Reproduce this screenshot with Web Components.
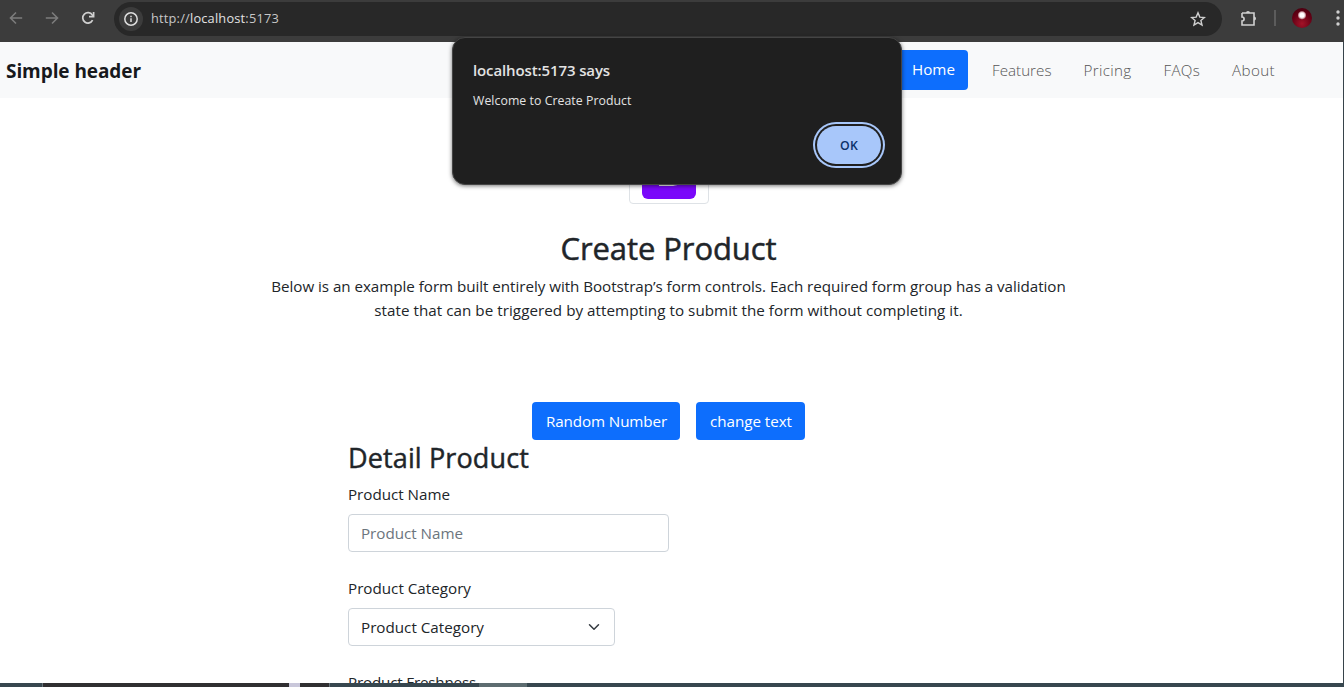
<!DOCTYPE html>
<html lang="en">
<head>
<meta charset="utf-8">
<title>Create Product</title>
<style>
html,body{margin:0;height:100%;overflow:hidden}
body{font-family:"Open Sans","Noto Sans",sans-serif;color:#212529;background:#fff}
</style>
</head>
<body>
<app-window></app-window>
<script>
const define = (name, html, after) => {
  const t = document.createElement('template');
  t.innerHTML = html;
  customElements.define(name, class extends HTMLElement {
    connectedCallback() {
      if (this.shadowRoot) return;
      this.attachShadow({mode: 'open'}).append(t.content.cloneNode(true));
      if (after) after(this);
    }
  });
};

// One line of text whose tracking is adjusted to the width given in its "w" attribute.
define('fit-text', `<style>:host{display:inline-block;white-space:nowrap;text-align:left}span{display:inline-block}</style><span><slot></slot></span>`, el => {
  const s = el.shadowRoot.querySelector('span');
  const w = +el.getAttribute('w');
  requestAnimationFrame(() => {
    s.style.letterSpacing = (w - s.getBoundingClientRect().width) / el.textContent.length + 'px';
    el.style.width = w + 'px';
  });
});

define('browser-bar', `<style>
:host{display:flex;align-items:center;height:42px;box-sizing:border-box;padding-bottom:6px;background:#3c3c3c;flex:none}
svg{display:block;flex:none}
.nav{display:flex;gap:20px;padding-left:8px;width:106px;box-sizing:border-box;flex:none}
.url{display:flex;align-items:center;box-sizing:border-box;width:1108px;height:34px;margin-top:1px;border-radius:17px;background:#282828;padding:0 16px 0 5px;flex:none;color:#e3e3e3;font-size:12.8px}
.url i{display:grid;place-items:center;width:24px;height:24px;border-radius:50%;background:#3c3c3c;margin-right:8px}
.url fit-text{flex:1;padding-bottom:2px}
.url em{font-style:normal;color:#c7c7c7}
.star{margin-left:auto}
.url-wrap{margin-left:8px}
.sep{flex:none;width:2px;height:16px;background:#5c5c5c;margin:0 16px 0 16px}
.av{flex:none;width:20px;height:20px;border-radius:50%;background:radial-gradient(circle at 50% 36%,#fff 0 2px,#d9b5bb 3.2px,transparent 4.5px),radial-gradient(circle at 50% 78%,#a31328,#650015 55%,#3e000d);margin-right:17px}
.ext{margin-left:18px}
</style>
<div class="nav">
<svg width="16" height="16" viewBox="0 0 16 16" fill="none" stroke="#7c7c7c" stroke-width="1.6"><path d="M14.2 8H2.8M8 2.5 2.5 8 8 13.500"/></svg>
<svg width="16" height="16" viewBox="0 0 16 16" fill="none" stroke="#7c7c7c" stroke-width="1.6"><path d="M1.800 8h11.400M8 2.500 13.500 8 8 13.500"/></svg>
<svg width="16" height="16" viewBox="0 0 16 16" fill="none" stroke="#d0d0d0" stroke-width="1.700"><path d="M12.600 10.200A5.200 5.200 0 1 1 12.300 5L13.600 6.400"/><path d="M13.600 2v4.600H9"/></svg>
</div>
<div class="url-wrap"><div class="url"><i><svg width="16" height="16" viewBox="0 0 16 16" fill="none" stroke="#dedede" stroke-width="1.500"><circle cx="8" cy="8" r="6.200"/><path d="M8 7.200v3.800M8 4.700v1.500"/></svg></i>
<fit-text w="128"><em>http://</em>localhost<em>:5173</em></fit-text>
<svg class="star" width="16" height="16" viewBox="0 0 16 16" fill="none" stroke="#d0d0d0" stroke-width="1.400"><path d="M8 1.800 9.800 6.100 14.400 6.500 10.900 9.500 12 14 8 11.600 4 14 5.100 9.500 1.600 6.500 6.200 6.100Z"/></svg></div></div>
<svg class="ext" width="18" height="18" viewBox="0 0 18 18"><path d="M2 4h4.500M9.500 4H14V8M14 11v5H2v-4c2.800 0 2.800-4 0-4V4M6.500 4h3M14 8v3" fill="none" stroke="#d0d0d0" stroke-width="1.600"/><path d="M6 4a2 2 0 0 1 4 0ZM14 7.500a2 2 0 0 1 0 4Z" fill="#d0d0d0"/></svg>
<div class="sep"></div><div class="av"></div>
<svg width="16" height="18" viewBox="0 0 16 18" fill="#d0d0d0"><circle cx="9" cy="3" r="1.700"/><circle cx="9" cy="9" r="1.700"/><circle cx="9" cy="15" r="1.700"/></svg>`);

define('site-header', `<style>
:host{display:flex;align-items:center;height:56px;background:#f8f9fa;padding:0 53px 0 6px;flex:none}
.brand{font-size:19px;font-weight:700;line-height:28px;color:#17191c;padding-top:2px}
nav{display:flex;align-items:center;margin-left:auto}
a{display:block;font-size:15.200px;line-height:24px;padding:8px 16px;color:#555;font-weight:300}
a.on{background:#0d6efd;color:#fff;border-radius:4px;margin-right:8px;font-weight:400;padding:7px 13px 9px 16px}
a:last-child{padding-right:15px}
</style>
<div class="brand"><fit-text w="135">Simple header</fit-text></div>
<nav><a class="on"><fit-text w="43">Home</fit-text></a><a><fit-text w="59.500">Features</fit-text></a><a><fit-text w="48">Pricing</fit-text></a><a><fit-text w="36.500">FAQs</fit-text></a><a><fit-text w="43">About</fit-text></a></nav>`);

define('brand-thumb', `<style>
:host{display:flex;justify-content:center;align-items:flex-end;box-sizing:border-box;width:80px;height:64px;border:1px solid #dee2e6;border-radius:4px;padding-bottom:4px}
svg{display:block}</style>
<svg width="54" height="43" viewBox="0 0 54 43"><rect width="54" height="43" rx="6" fill="#7a08fa"/><path d="M17 8h11c12 0 12 9 5 11 10 2 8 11-4 11H17Z" fill="#fff"/></svg>`);

define('ui-button', `<style>
:host{display:block;box-sizing:border-box;height:38px;padding:7px 13px 7px 14px;border-radius:4px;background:#0d6efd;color:#fff;font-size:15.200px;line-height:24px}
</style><slot></slot>`);

define('form-field', `<style>
:host{display:block;font-size:15.200px;line-height:24px;margin-bottom:24px}
label{display:block;margin-bottom:8px}
.box{display:flex;align-items:center;justify-content:space-between;box-sizing:border-box;width:var(--box);height:38px;border:1px solid #ced4da;border-radius:4px;padding:0 12px;background:#fff;color:var(--ink,#212529)}
</style><label><slot name="label"></slot></label><div class="box"><slot></slot></div>`);

define('chevron-down', `<style>:host{display:block}svg{display:block}</style>
<svg width="16" height="12" viewBox="0 0 16 16" fill="none" stroke="#343a40" stroke-width="2" stroke-linecap="round" stroke-linejoin="round"><path d="m2 5 6 6 6-6"/></svg>`);

define('product-page', `<style>
:host{display:flex;flex-direction:column;flex:1;min-height:0;overflow:hidden;background:#fff}
.intro{display:flex;flex-direction:column;align-items:center;width:1337px;padding-top:42px}
h2{margin:25px 0 7px;font-size:31px;line-height:38px;font-weight:500;-webkit-text-stroke:.5px #212529}
.p{font-size:15.200px;line-height:24px;height:24px}
.actions{display:flex;gap:16px;margin-top:80px}
form{padding-left:348px}
h3{margin:1px 0 7px;font-size:27px;line-height:34px;font-weight:500;-webkit-text-stroke:.45px #212529}
</style>
<div class="intro"><brand-thumb></brand-thumb>
<h2><fit-text w="216">Create Product</fit-text></h2>
<div class="p"><fit-text w="794.500">Below is an example form built entirely with Bootstrap’s form controls. Each required form group has a validation</fit-text></div>
<div class="p"><fit-text w="588.500">state that can be triggered by attempting to submit the form without completing it.</fit-text></div>
<div class="actions"><ui-button><fit-text w="121">Random Number</fit-text></ui-button><ui-button><fit-text w="82">change text</fit-text></ui-button></div></div>
<form><h3><fit-text w="181">Detail Product</fit-text></h3>
<form-field style="--box:321px;--ink:#6c757d"><fit-text slot="label" w="102">Product Name</fit-text><fit-text w="102">Product Name</fit-text></form-field>
<form-field style="--box:267px"><fit-text slot="label" w="123">Product Category</fit-text><fit-text w="123">Product Category</fit-text><chevron-down></chevron-down></form-field>
<form-field style="--box:267px"><fit-text slot="label" w="128">Product Freshness</fit-text></form-field></form>`);

define('alert-dialog', `<style>
:host{position:absolute;left:452px;top:37px;box-sizing:border-box;width:450px;height:148px;display:flex;flex-direction:column;border-radius:13px;background:#1f1f1f;border:1px solid #444;padding:20px 20px 0;box-shadow:0 1px 4px #0008;color:#e3e3e3}
.t{font-size:15px;font-weight:600;line-height:24px}
.m{font-size:12.300px;line-height:20px;margin-top:9px}
.ok{align-self:flex-end;display:grid;place-items:center;box-sizing:border-box;width:64px;height:38px;margin:15px 0 0;border-radius:20px;background:#a8c7fa;color:#0a3069;font-size:12.300px;font-weight:600;box-shadow:0 0 0 2px #1f1f1f,0 0 0 4px #a8c7fa}
</style><div class="t"><fit-text w="137">localhost:5173 says</fit-text></div><div class="m"><fit-text w="158.500">Welcome to Create Product</fit-text></div><div class="ok"><fit-text w="18">OK</fit-text></div>`);

define('task-strip', `<style>
:host{display:flex;height:4px;background:#37474f;flex:none}
i{display:block;height:4px;flex:none}
</style><i style="width:42px"></i><i style="width:1px;background:#68747a"></i><i style="width:246px;background:#302f31"></i><i style="width:11px;background:#c9c7da"></i><i style="width:29px;background:#302f31"></i><i style="width:1px;background:#68747a"></i><i style="width:149px"></i><i style="width:48px;background:#5d6c70"></i>`);

define('app-window', `<style>
:host{position:relative;display:flex;flex-direction:column;width:1344px;height:687px;overflow:hidden}
main{display:flex;flex-direction:column;flex:1;min-height:0;border-right:1px solid #37434a}
</style><browser-bar></browser-bar><main><site-header></site-header><product-page></product-page></main><task-strip></task-strip><alert-dialog></alert-dialog>`);
</script>
</body>
</html>
